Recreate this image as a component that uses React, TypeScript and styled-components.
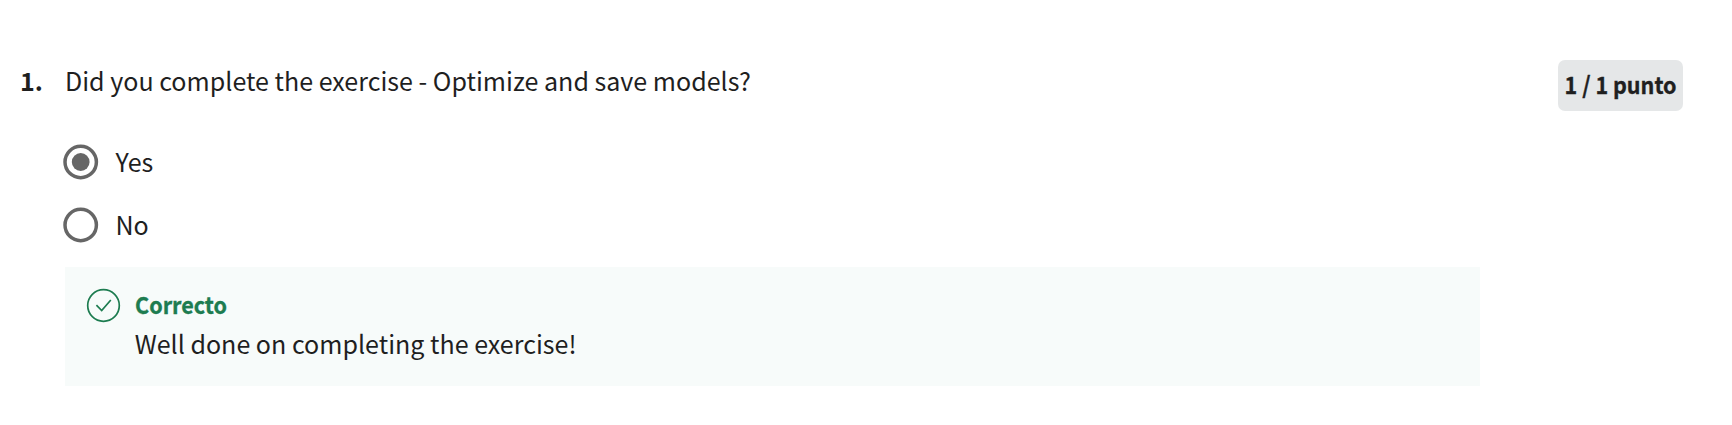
import React from "react";
import styled, { createGlobalStyle } from "styled-components";

const GlobalStyle = createGlobalStyle`
  body {
    margin: 0;
    background: #fff;
    color: #1f1f1f;
    font-family: "Noto Sans CJK SC", "Noto Sans", sans-serif;
    font-size: 25.05px;
    line-height: 36px;
  }
`;

const Page = styled.main`
  box-sizing: border-box;
  height: 425px;
  padding: 60px 49px 0 20px;
  display: flex;
  align-items: flex-start;
`;

const QuestionNumber = styled.div`
  width: 45px;
  padding-top: 2px;
  flex: none;
  font-weight: 700;
`;

const Content = styled.section`
  width: 1415px;
  padding-top: 2px;
  flex: none;
`;

const Prompt = styled.div`
  white-space: nowrap;
`;

const Options = styled.div`
  margin: 38px 0 0 -2px;
  display: grid;
  grid-auto-rows: 36px;
  row-gap: 27px;
  padding-top: 8px;
`;

const Option = styled.label`
  display: flex;
  align-items: flex-start;
  gap: 16.5px;
`;

const OptionText = styled.span`
  margin-top: -1px;
`;

const Radio = styled.svg`
  display: block;
  width: 36px;
  height: 36px;
  flex: none;
`;

const Feedback = styled.div`
  box-sizing: border-box;
  height: 119px;
  margin-top: 24px;
  padding: 21px 21px 0;
  display: flex;
  gap: 13.7px;
  background: #f7fbfa;
`;

const CheckIcon = styled.svg`
  width: 35px;
  height: 35px;
  flex: none;
`;

const FeedbackBody = styled.div`
  margin-top: -2px;
`;

const CondensedBold = styled.span`
  display: inline-block;
  font-size: 23.3px;
  font-weight: 700;
  white-space: nowrap;
  -webkit-text-stroke: 0.35px currentColor;
  transform: scaleX(0.925);
`;

const FeedbackTitle = styled(CondensedBold)`
  display: block;
  transform-origin: 0 0;
  color: #1d7c50;
`;

const FeedbackText = styled.div`
  margin-top: 3px;
`;

const Score = styled.div`
  box-sizing: border-box;
  width: 125px;
  height: 51px;
  margin-left: auto;
  padding-bottom: 3px;
  flex: none;
  display: flex;
  align-items: center;
  justify-content: center;
  border-radius: 7px;
  background: #e5e7e8;
`;

function RadioMark({ checked }: { checked?: boolean }) {
  return (
    <Radio viewBox="0 0 36 36" fill="none">
      <circle cx="17.7" cy="18" r="15.7" stroke="#666" strokeWidth="3.5" />
      {checked && <circle cx="17.7" cy="18" r="8.9" fill="#666" />}
    </Radio>
  );
}

export default function App() {
  return (
    <>
      <GlobalStyle />
      <Page>
        <QuestionNumber>1.</QuestionNumber>
        <Content>
          <Prompt>Did you complete the exercise - Optimize and save models?</Prompt>
          <Options>
            <Option>
              <RadioMark checked />
              <OptionText>Yes</OptionText>
            </Option>
            <Option>
              <RadioMark />
              <OptionText>No</OptionText>
            </Option>
          </Options>
          <Feedback>
            <CheckIcon viewBox="0 0 35 35" fill="none" stroke="#1d7c50" strokeWidth="1.7">
              <circle cx="17.5" cy="17.5" r="15.8" />
              <path d="M10.4 17.2 15.7 22.6 24.8 12" />
            </CheckIcon>
            <FeedbackBody>
              <FeedbackTitle>Correcto</FeedbackTitle>
              <FeedbackText>Well done on completing the exercise!</FeedbackText>
            </FeedbackBody>
          </Feedback>
        </Content>
        <Score>
          <CondensedBold>1 / 1 punto</CondensedBold>
        </Score>
      </Page>
    </>
  );
}
